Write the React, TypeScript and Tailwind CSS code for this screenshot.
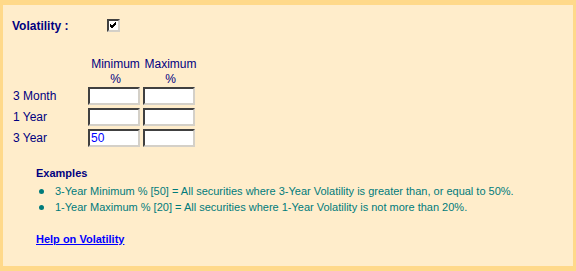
import React from 'react';

const rows = [
  { label: '3 Month', min: '', max: '' },
  { label: '1 Year', min: '', max: '' },
  { label: '3 Year', min: '50', max: '' },
];

const examples = [
  '3-Year Minimum % [50] = All securities where 3-Year Volatility is greater than, or equal to 50%.',
  '1-Year Maximum % [20] = All securities where 1-Year Volatility is not more than 20%.',
];

function Field({ value }: { value: string }) {
  return (
    <div className="w-[52px] h-[18px] bg-white border-2 border-t-[#404040] border-l-[#404040] border-r-[#d4d0c8] border-b-[#d4d0c8] flex items-center px-[1px] text-[12px] leading-none text-[#0000ff]">
      {value}
    </div>
  );
}

export default function App() {
  return (
    <div
      className="w-[576px] h-[271px] bg-[#ffd98a] pt-[5px] pl-[3px] pr-[3px] pb-[5px]"
      style={{ fontFamily: '"Liberation Sans", Arial, sans-serif' }}
    >
      <div className="h-full bg-[#ffedcb] text-[#000080] flex flex-col pt-[14px]">
        {/* Volatility checkbox */}
        <div className="flex items-center h-[13px]">
          <span className="ml-[9px] w-[95px] text-[12px] font-bold leading-none">Volatility :</span>
          <div className="w-[13px] h-[13px] bg-white border-2 border-t-[#404040] border-l-[#404040] border-r-[#d4d0c8] border-b-[#d4d0c8] flex items-center justify-center">
            <svg width="9" height="9" viewBox="0 0 9 9">
              <path d="M1 4 L3 6 L7 2 M1 5 L3 7 L7 3 M1 3 L3 5 L7 1" stroke="#000" strokeWidth="1" fill="none" />
            </svg>
          </div>
        </div>

        {/* headers */}
        <div className="flex mt-[25px] ml-[85px] text-[12px] leading-[15px]">
          <div className="w-[55px] text-center">Minimum<br />%</div>
          <div className="w-[55px] text-center">Maximum<br />%</div>
        </div>

        {/* inputs */}
        <div className="flex flex-col gap-[3px]">
          {rows.map((r) => (
            <div key={r.label} className="flex items-center h-[18px]">
              <span className="ml-[10px] w-[75px] text-[12px] leading-none">{r.label}</span>
              <div className="flex gap-[3px]">
                <Field value={r.min} />
                <Field value={r.max} />
              </div>
            </div>
          ))}
        </div>

        {/* examples */}
        <div className="ml-[33px] mt-[20px]">
          <div className="text-[11px] font-bold leading-[13px]">Examples</div>
          <ul className="mt-[5px] flex flex-col gap-[3px]">
            {examples.map((e) => (
              <li key={e} className="flex items-center text-[11px] leading-[13px] text-[#007b7b]">
                <span className="w-[5px] h-[5px] rounded-full bg-[#007b7b] ml-[3px] mr-[11px]" />
                {e}
              </li>
            ))}
          </ul>
          <a href="#" className="block mt-[19px] text-[11px] font-bold leading-[13px] text-[#0000ff] underline">
            Help on Volatility
          </a>
        </div>
      </div>
    </div>
  );
}
